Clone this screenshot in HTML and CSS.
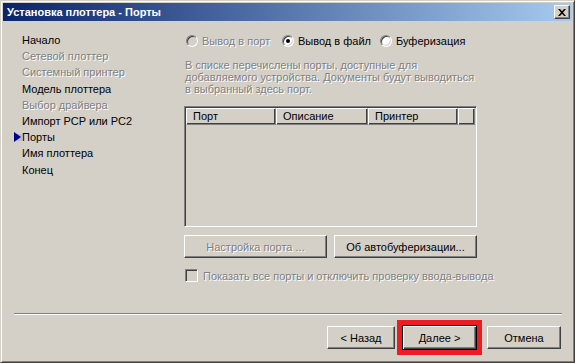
FILE: index.html
```html
<!DOCTYPE html>
<html lang="ru">
<head>
    <meta charset="UTF-8">
    <title>Установка плоттера - Порты</title>
    <link rel="stylesheet" href="styles.css">
</head>
<body>
<div class="window">
    <div class="titlebar">
        <span class="title">Установка плоттера - Порты</span>
        <button class="close-btn" aria-label="Закрыть">
            <svg width="8" height="7" viewBox="0 0 8 7">
                <path d="M0 0h2l2 2.2L6 0h2L5 3.5 8 7H6L4 4.8 2 7H0l3-3.5z" fill="#000"/>
            </svg>
        </button>
    </div>

    <div class="main">
        <!-- wizard steps -->
        <ul class="steps">
            <li>Начало</li>
            <li class="disabled">Сетевой плоттер</li>
            <li class="disabled">Системный принтер</li>
            <li>Модель плоттера</li>
            <li class="disabled">Выбор драйвера</li>
            <li>Импорт PCP или PC2</li>
            <li class="current">
                <span class="marker">
                    <svg width="8" height="10" viewBox="0 0 8 10"><polygon points="0,0 7,5 0,10" fill="#00008c"/></svg>
                </span>Порты
            </li>
            <li>Имя плоттера</li>
            <li>Конец</li>
        </ul>

        <div class="page">
            <div class="radios">
                <label class="radio r1 disabled"><span class="dot"></span>Вывод в порт</label>
                <label class="radio r2"><span class="dot checked"></span>Вывод в файл</label>
                <label class="radio r3"><span class="dot"></span>Буферизация</label>
            </div>

            <p class="hint">В списке перечислены порты, доступные для<br>добавляемого устройства. Документы будут выводиться<br>в выбранный здесь порт.</p>

            <div class="listbox">
                <div class="list-header">
                    <span class="col c1">Порт</span>
                    <span class="col c2">Описание</span>
                    <span class="col c3">Принтер</span>
                    <span class="col c4"></span>
                </div>
            </div>

            <div class="page-buttons">
                <button class="btn wide" disabled>Настройка порта ...</button>
                <button class="btn wide">Об автобуферизации...</button>
            </div>

            <label class="check disabled"><span class="box"></span>Показать все порты и отключить проверку ввода-вывода</label>
        </div>
    </div>

    <div class="separator"></div>

    <div class="footer">
        <button class="btn back">&lt; Назад</button>
        <span class="highlight"><button class="btn default">Далее &gt;</button></span>
        <button class="btn cancel">Отмена</button>
    </div>
</div>
</body>
</html>
```

FILE: styles.css
```css
* {
    box-sizing: border-box;
}

body {
    margin: 0;
    font-family: 'Liberation Sans', Arial, sans-serif;
    font-size: 11px;
    color: #000;
    background: #d4d0c8;
}

.window {
    width: 575px;
    height: 363px;
    padding: 2px;
    background: #d4d0c8;
    border: 1px solid;
    border-color: #d4d0c8 #404040 #404040 #d4d0c8;
    box-shadow: inset 1px 1px #fff, inset -1px -1px #808080;
    display: flex;
    flex-direction: column;
}

.titlebar {
    height: 18px;
    display: flex;
    align-items: center;
    justify-content: space-between;
    padding: 0 2px 0 4px;
    background: linear-gradient(to right, #0a246a, #a6caf0);
}

.title {
    color: #fff;
    font-weight: bold;
    font-size: 11px;
}

.close-btn {
    width: 16px;
    height: 14px;
    padding: 0;
    display: flex;
    align-items: center;
    justify-content: center;
    background: #d4d0c8;
    border: 1px solid;
    border-color: #fff #404040 #404040 #fff;
    box-shadow: inset -1px -1px #808080;
}

.main {
    height: 292px;
    display: flex;
}

.steps {
    width: 181px;
    margin: 0;
    padding: 11px 0 0 11px;
    list-style: none;
}

.steps li {
    line-height: 16.2px;
    height: 16.2px;
    padding-left: 8px;
    white-space: nowrap;
}

.disabled,
.btn:disabled {
    color: #808080;
    text-shadow: 1px 1px 0 #fff;
}

.steps .current {
    padding-left: 0;
    display: flex;
    align-items: center;
}

.marker {
    width: 8px;
    height: 10px;
    display: inline-flex;
    background: linear-gradient(#d4d0c8 2px, #bcbcc8 2px, #bcbcc8 9px, #d4d0c8 9px);
}

.page {
    width: 293px;
    padding-top: 12px;
}

.radios {
    display: flex;
    height: 16px;
    align-items: center;
    padding-left: 2px;
}

.radio {
    display: flex;
    align-items: center;
    white-space: nowrap;
}

.r1 { width: 96px; }
.r2 { width: 98px; }

.dot {
    flex-shrink: 0;
    width: 12px;
    height: 12px;
    margin-right: 4px;
    border-radius: 50%;
    background: #fff;
    border: 1px solid;
    border-color: #808080 #fff #fff #808080;
    box-shadow: inset 1px 1px #404040, inset -1px -1px #d4d0c8;
    position: relative;
}

.radio.disabled .dot {
    background: #d4d0c8;
}

.dot.checked::after {
    content: "";
    position: absolute;
    left: 3px;
    top: 3px;
    width: 4px;
    height: 4px;
    border-radius: 50%;
    background: #000;
}

.hint {
    margin: 10px 0 0 1px;
    line-height: 12px;
    white-space: nowrap;
    color: #808080;
    text-shadow: 1px 1px 0 #fff;
}

.listbox {
    margin-top: 11px;
    height: 121px;
    border: 1px solid;
    border-color: #808080 #fff #fff #808080;
    box-shadow: inset 1px 1px #404040, inset -1px -1px #d4d0c8;
    padding: 1px;
}

.list-header {
    display: flex;
    height: 17px;
}

.col {
    height: 17px;
    line-height: 15px;
    padding-left: 6px;
    border: 1px solid;
    border-color: #fff #808080 #808080 #fff;
    box-shadow: inset -1px -1px #404040;
}

.c1 { width: 90px; }
.c2 { width: 92px; }
.c3 { width: 90px; }
.c4 { flex: 1; }

.page-buttons {
    display: flex;
    gap: 7px;
    margin-top: 8px;
}

.btn {
    height: 23px;
    padding: 0;
    font-family: inherit;
    font-size: 11px;
    color: #000;
    background: #d4d0c8;
    border: 1px solid;
    border-color: #fff #404040 #404040 #fff;
    box-shadow: inset -1px -1px #808080;
}

.btn.wide {
    width: 143px;
}

.check {
    display: flex;
    align-items: center;
    margin-top: 11px;
    padding-left: 1px;
    white-space: nowrap;
}

.box {
    flex-shrink: 0;
    width: 13px;
    height: 13px;
    margin-right: 5px;
    background: #d4d0c8;
    border: 1px solid;
    border-color: #808080 #fff #fff #808080;
    box-shadow: inset 1px 1px #404040, inset -1px -1px #d4d0c8;
}

.separator {
    height: 2px;
    margin: 0 10px 0 11px;
    border-top: 1px solid #808080;
    border-bottom: 1px solid #fff;
}

.footer {
    flex: 1;
    display: flex;
    align-items: center;
    padding-left: 324px;
}

.btn.back {
    width: 68px;
}

.highlight {
    display: flex;
    margin-left: 2px;
    border: 5px solid #ed1c24;
}

.btn.default {
    width: 75px;
    height: 25px;
    border: 1px solid #000;
    box-shadow: inset 1px 1px #fff, inset -1px -1px #404040, inset -2px -2px #808080;
}

.btn.cancel {
    width: 74px;
    margin-left: 5px;
}
```
